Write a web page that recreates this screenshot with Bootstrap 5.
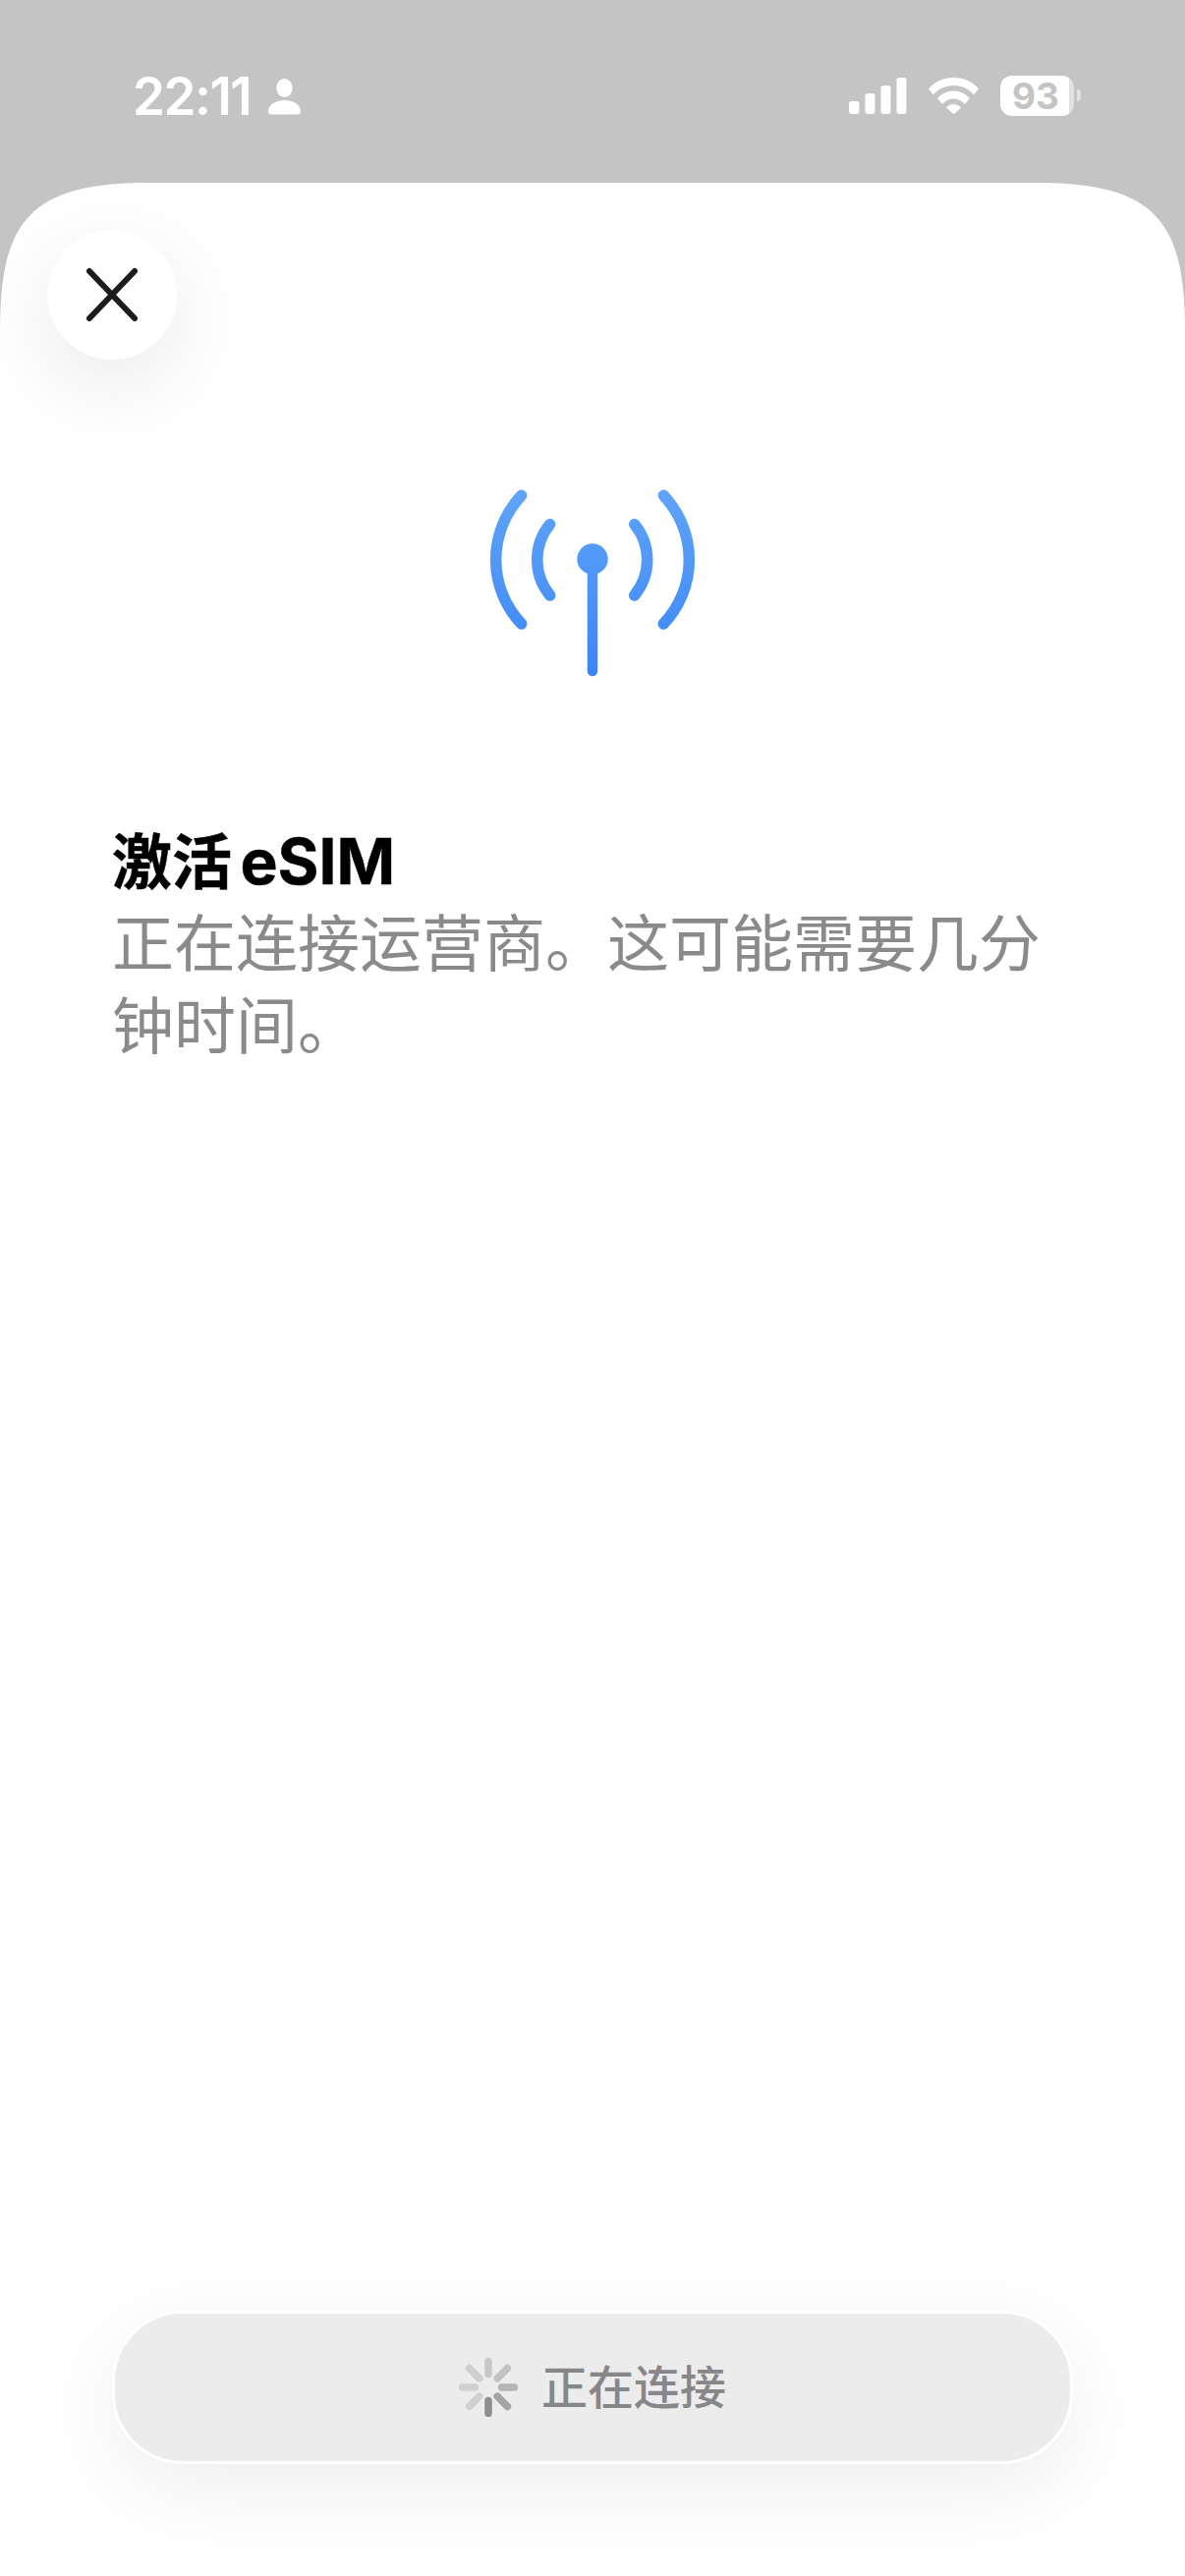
<!DOCTYPE html>
<html lang="zh-CN">
<head>
    <meta charset="UTF-8">
    <meta name="viewport" content="width=device-width, initial-scale=1.0">
    <title>激活 eSIM</title>
    <link href="https://cdn.jsdelivr.net/npm/bootstrap@5.3.3/dist/css/bootstrap.min.css" rel="stylesheet">
    <style>
        body {
            background-color: #c4c4c4;
            font-family: Inter, "Noto Sans CJK SC", sans-serif;
            overflow: hidden;
        }
        .status-row {
            height: 186px;
            flex: none;
            padding: 72px 106px 0 135px;
            color: #fff;
        }
        .clock {
            font-size: 53px;
            line-height: 52px;
            font-weight: 600;
            letter-spacing: -1.5px;
        }
        .person-icon {
            margin: 8px 0 0 18px;
        }
        .signal-icon {
            margin-top: 7px;
        }
        .wifi-icon {
            margin: 7px 0 0 22px;
        }
        .batt-box {
            width: 75px;
            height: 41px;
            margin: 5px 0 0 22px;
            border-radius: 12px;
            background: linear-gradient(90deg, #fff 0 70px, rgba(255,255,255,.5) 70px);
            color: #c4c4c4;
            font-size: 37px;
            font-weight: 700;
            line-height: 41px;
            padding-right: 3px;
        }
        .batt-nub {
            width: 4px;
            height: 12px;
            margin: 19px 0 0 3px;
            border-radius: 0 6px 6px 0;
            background: rgba(255,255,255,.5);
        }
        /* iOS style continuous corners, border-radius is too round here */
        .sheet {
            background: #fff;
            clip-path: path('M0,150 C0,40 30,0 150,0 L1056,0 C1176,0 1206,40 1206,150 L1206,2436 L0,2436 Z');
            padding: 0 114px 114px;
        }
        .close-btn {
            width: 132px;
            height: 132px;
            margin: 48px 0 0 -66px;
            border: 0;
            border-radius: 50%;
            background: #fff;
            box-shadow: 0 26px 90px rgba(0,0,0,.09);
        }
        .ant-icon {
            display: block;
            margin: 124px 0 0 376px;
        }
        .sheet-title {
            height: 85px;
            margin: 134px 0 0;
            font-size: 61px;
            line-height: 85px;
            font-weight: 700;
            color: #000;
            -webkit-text-stroke: .5px #000;
        }
        .sheet-title span {
            font-size: 64px;
            margin-left: -6px;
        }
        .sheet-desc {
            margin: -5px 0 0;
            font-family: "Noto Sans CJK SC", sans-serif;
            font-size: 63px;
            line-height: 84px;
            color: #8a8a8a;
        }
        .connect-btn {
            height: 156px;
            margin-top: auto;
            gap: 24px;
            border: 3px solid #fff;
            border-radius: 72px;
            background: #ececec;
            color: #87878a;
            font-size: 47px;
            font-weight: 500;
            box-shadow: 0 24px 90px rgba(0,0,0,.07);
        }
    </style>
</head>
<body>
    <div class="d-flex flex-column vh-100">
        <!-- Status bar -->
        <div class="status-row d-flex justify-content-between align-items-start">
            <div class="d-flex align-items-start">
                <span class="clock">22:11</span>
                <svg class="person-icon" width="33" height="37" viewBox="0 0 33 37" fill="#fff">
                    <ellipse cx="16.5" cy="9.5" rx="8.2" ry="9.5"/>
                    <path d="M0 33C0 27 7 22 16.5 22S33 27 33 33C33 35.500 32 36.500 30 36.500H3C1 36.500 0 35.500 0 33Z"/>
                </svg>
            </div>
            <div class="d-flex align-items-start">
                <svg class="signal-icon" width="59" height="37" viewBox="0 0 59 37" fill="#fff">
                    <rect x="0" y="24" width="10.500" height="13" rx="3"/>
                    <rect x="16.500" y="16" width="10" height="21" rx="3"/>
                    <rect x="32.500" y="8" width="10" height="29" rx="3"/>
                    <rect x="48.500" y="0" width="10" height="37" rx="3"/>
                </svg>
                <svg class="wifi-icon" width="51" height="37" viewBox="0 0 51 37" fill="#fff">
                    <path d="M0 11.500C6.500 4 15 0 25.500 0S44.500 4 51 11.500L46 17.500C41 11.500 34 8 25.500 8S10 11.500 5 17.500Z"/>
                    <path d="M9 21C13 16.500 19 13.500 25.500 13.500S38 16.500 42 21L37 27C34 23.500 30 21.500 25.500 21.500S17 23.500 14 27Z"/>
                    <path d="M18 30.500C20 28.500 22.500 27 25.500 27S31 28.500 33 30.500L26.500 36.500C26 37 25 37 24.500 36.500Z"/>
                </svg>
                <div class="batt-box text-center">93</div>
                <div class="batt-nub"></div>
            </div>
        </div>

        <!-- Sheet -->
        <div class="sheet flex-grow-1 d-flex flex-column">
            <button class="close-btn d-flex align-items-center justify-content-center p-0" type="button" aria-label="关闭">
                <svg width="56" height="58" viewBox="0 0 56 58" fill="none" stroke="#1c1c1c" stroke-width="6" stroke-linecap="round">
                    <path d="M5 5L51 53M51 5L5 53"/>
                </svg>
            </button>

            <svg class="ant-icon" width="226" height="210" viewBox="490 490 226 210" fill="none" stroke="url(#antGrad)" stroke-width="11.500" stroke-linecap="round">
                <defs>
                    <linearGradient id="antGrad" gradientUnits="userSpaceOnUse" x1="0" y1="495" x2="0" y2="690">
                        <stop offset="0" stop-color="#60a5f9"/>
                        <stop offset="1" stop-color="#3a85f7"/>
                    </linearGradient>
                </defs>
                <path d="M530.700 504.300A95 95 0 0 0 530.700 635"/>
                <path d="M559.700 533.700A56.800 56.800 0 0 0 559.700 606"/>
                <path d="M675.300 504.300A95 95 0 0 1 675.300 635"/>
                <path d="M645.700 533.700A56.800 56.800 0 0 1 645.700 606"/>
                <path d="M603 569V683" stroke-width="10.500"/>
                <circle cx="603" cy="569" r="15.700" fill="url(#antGrad)" stroke="none"/>
            </svg>

            <h1 class="sheet-title">激活 <span>eSIM</span></h1>
            <p class="sheet-desc">正在连接运营商。这可能需要几分钟时间。</p>

            <div class="connect-btn d-flex align-items-center justify-content-center">
                <svg width="60" height="60" viewBox="0 0 60 60" fill="none" stroke-width="7.500" stroke-linecap="round">
                    <path d="M30 3.500V16.500" stroke="#c8c8c8"/>
                    <path d="M49.400 10.600L39.200 20.800" stroke="#c2c2c2"/>
                    <path d="M56.500 30H43.500" stroke="#b4b4b4"/>
                    <path d="M49.400 49.400L39.200 39.200" stroke="#a4a4a4"/>
                    <path d="M30 56.500V43.500" stroke="#8e8e90"/>
                    <path d="M10.600 49.400L20.800 39.200" stroke="#d0d0d0"/>
                    <path d="M3.500 30H16.500" stroke="#d0d0d0"/>
                    <path d="M10.600 10.600L20.800 20.800" stroke="#cfcfcf"/>
                </svg>
                <span>正在连接</span>
            </div>
        </div>
    </div>
</body>
</html>
